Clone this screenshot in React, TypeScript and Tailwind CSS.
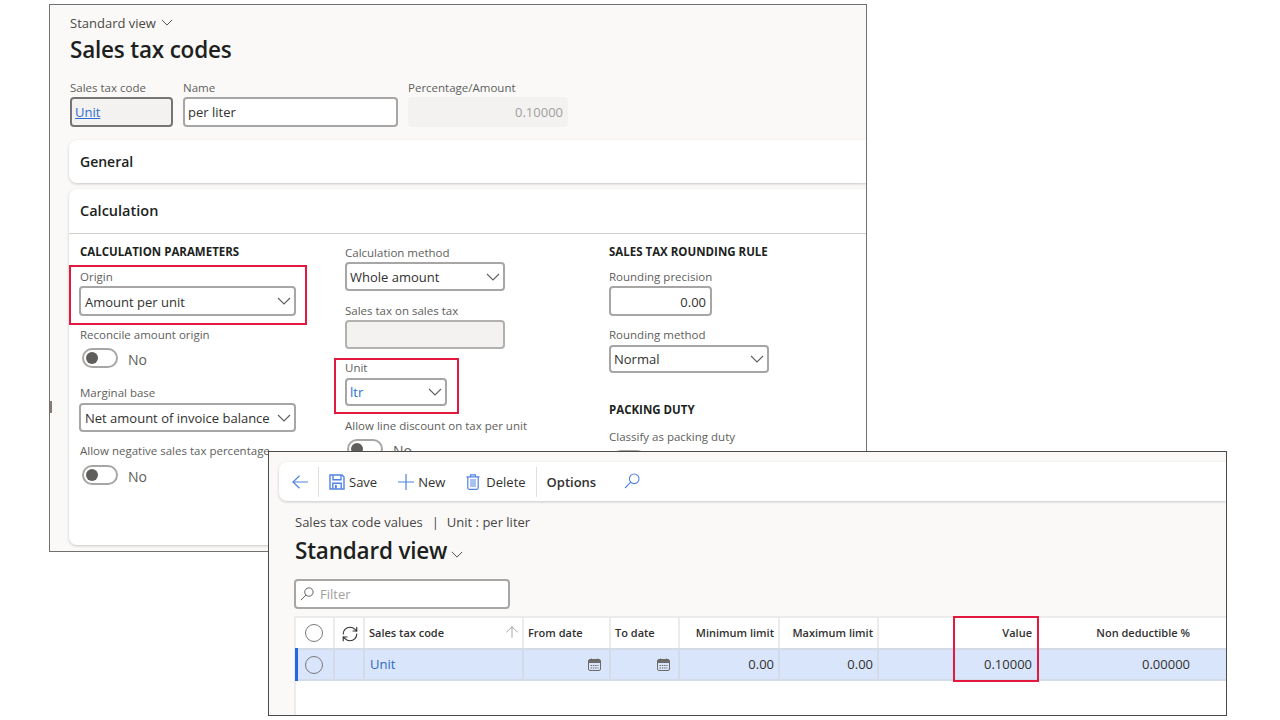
import { ArrowUp, RefreshCw } from "lucide-react"

const font = { fontFamily: '"Open Sans", "Noto Sans", sans-serif' }

function Label({ children, className = "" }: { children: string; className?: string }) {
  return <div className={`h-4 text-[11.5px] leading-4 font-medium whitespace-nowrap text-[#605e5c] ${className}`}>{children}</div>
}

function Heading({ children, className = "" }: { children: string; className?: string }) {
  return <div className={`h-4 text-[11.5px] leading-4 font-bold whitespace-nowrap text-[#201f1e] ${className}`}>{children}</div>
}

function Chevron({ className = "h-2 w-[14px] text-[#605e5c]" }: { className?: string }) {
  return (
    <svg viewBox="0 0 14 8" className={`shrink-0 ${className}`} fill="none" stroke="currentColor" strokeWidth="1.1">
      <path d="M1 1l6 6 6-6" />
    </svg>
  )
}

function Select({ value, width, height, blue, textTop = "mt-[2px]", className = "pl-[3px]" }: { value: string; width: string; height: string; blue?: boolean; textTop?: string; className?: string }) {
  return (
    <div className={`flex items-center justify-between rounded border-2 border-[#a8a6a4] bg-white pr-[3px] text-[13px] whitespace-nowrap ${blue ? "text-[#2b6fd6]" : "text-[#323130]"} ${width} ${height} ${className}`}>
      <span className={textTop}>{value}</span>
      <Chevron />
    </div>
  )
}

function Toggle({ className = "" }: { className?: string }) {
  return (
    <div className={`flex items-center ${className}`}>
      <div className="ml-[2px] flex h-5 w-9 items-center rounded-full border-2 border-[#a8a6a4] bg-white pl-[2px]">
        <div className="h-3 w-3 rounded-full bg-[#605e5c]" />
      </div>
      <span className="mt-[3px] ml-[10px] text-[14px] leading-4 text-[#605e5c]">No</span>
    </div>
  )
}

function RedBox({ className }: { className: string }) {
  return <div className={`absolute border-2 border-[#e3193f] ${className}`} />
}

function Calendar() {
  return (
    <svg viewBox="0 0 13 13" className="h-[13px] w-[13px] text-[#6d6b69]" fill="none" stroke="currentColor">
      <rect x="0.5" y="1.5" width="12" height="11" rx="1.5" />
      <path d="M1 2h11v3H1z" fill="currentColor" stroke="none" />
      <path d="M3.5 0.5v2M9.5 0.5v2" />
      <path d="M2.5 7.5h8M2.5 10h8" strokeDasharray="1.5 0.8" />
    </svg>
  )
}

function BackArrow() {
  return (
    <svg viewBox="0 0 16 14" className="h-[14px] w-4 text-[#4f83e3]" fill="none" stroke="currentColor" strokeWidth="1.2">
      <path d="M16 7H1M7.5 0.8L1 7l6.5 6.2" />
    </svg>
  )
}

function PlusIcon() {
  return (
    <svg viewBox="0 0 16 16" className="h-4 w-4 text-[#4f83e3]" fill="none" stroke="currentColor" strokeWidth="1.2">
      <path d="M8 0v16M0 8h16" />
    </svg>
  )
}

function SaveIcon() {
  return (
    <svg viewBox="0 0 16 16" className="h-4 w-4 text-[#4f83e3]" fill="none" stroke="currentColor" strokeWidth="1.4">
      <path d="M1 1h12l2 2v12H1z" />
      <path d="M4 1.2v4.6h8V1.2" />
      <path d="M3.8 14.8V9.2h8.4v5.6" />
      <path d="M6 11h1.8v3.4H6z" fill="currentColor" stroke="none" />
    </svg>
  )
}

function TrashIcon() {
  return (
    <svg viewBox="0 0 14 16" className="h-4 w-[14px] text-[#4f83e3]" fill="none" stroke="currentColor" strokeWidth="1.2">
      <path d="M0.5 2.8h13M4.6 2.8V0.8h4.8v2" />
      <path d="M1.8 2.8v11c0 .9.5 1.5 1.3 1.5h7.8c.8 0 1.3-.6 1.3-1.5v-11" />
      <rect x="4" y="5" width="6" height="8" fill="currentColor" fillOpacity="0.5" stroke="none" />
    </svg>
  )
}

function SearchIcon({ className }: { className: string }) {
  return (
    <svg viewBox="0 0 16 16" className={`shrink-0 ${className}`} fill="none" stroke="currentColor" strokeWidth="1.1">
      <circle cx="10.2" cy="5.8" r="4.8" />
      <path d="M6.8 9.2L1 15" />
    </svg>
  )
}

function Radio() {
  return <div className="h-[18px] w-[18px] rounded-full border border-[#7a7a7a]" />
}

function ToolbarItem({ icon, label, gap }: { icon: React.ReactNode; label: string; gap: string }) {
  return (
    <div className={`flex items-center text-[13px] text-[#323130] ${gap}`}>
      {icon}
      <span className="mt-[3px]">{label}</span>
    </div>
  )
}

const gridCols = "grid grid-cols-[39px_30px_159px_87px_69px_100px_99px_159px_157px_1fr]"

function HeaderCell({ children, right }: { children?: React.ReactNode; right?: boolean }) {
  return (
    <div className={`flex items-center border-r-2 border-[#edebe9] text-[11px] font-semibold whitespace-nowrap text-[#323130] ${right ? "justify-end pr-[4px]" : "pl-1"}`}>
      {children}
    </div>
  )
}

function RowCell({ children, right, icon }: { children?: React.ReactNode; right?: boolean; icon?: boolean }) {
  return (
    <div className={`flex items-center border-r-2 border-[#d3dbe8] text-[13px] text-[#323130] ${right ? "justify-end pr-[4px]" : icon ? "justify-end pr-2" : "pl-1"}`}>
      {children}
    </div>
  )
}

export default function App() {
  return (
    <div className="relative h-[720px] w-[1280px] overflow-hidden bg-white" style={font}>
      {/* back window */}
      <div className="absolute top-[4px] left-[49px] h-[548px] w-[818px] overflow-hidden border border-[#707070] bg-[#faf9f8]">
        <div className="absolute top-[396px] left-0 h-3 w-[2px] bg-[#8a7a72]" />
        <div className="pt-[10px] pl-[20px]">
          <div className="flex h-4 items-center gap-[5px] text-[13px] leading-4 text-[#4a4846]">
            Standard view
            <Chevron className="mb-[2px] h-[7px] w-[12px] text-[#4a4846]" />
          </div>
          <h1 className="mt-[3px] h-8 text-[22.5px] leading-8 font-semibold tracking-[-0.2px] text-[#201f1e]">Sales tax codes</h1>
          <div className="mt-[14px] flex">
            <div className="w-[113px]">
              <Label>Sales tax code</Label>
              <div className="mt-[1px] flex h-[30px] w-[103px] items-center rounded border-2 border-[#757575] bg-[#f3f2f1] pt-[1px] pl-[3px] text-[13px] text-[#2b6fd6] underline">Unit</div>
            </div>
            <div className="w-[225px]">
              <Label>Name</Label>
              <div className="mt-[1px] flex h-[30px] w-[215px] items-center rounded border-2 border-[#a8a6a4] bg-white pt-[1px] pl-[3px] text-[13px] text-[#323130]">per liter</div>
            </div>
            <div>
              <Label>Percentage/Amount</Label>
              <div className="mt-[1px] flex h-[30px] w-[160px] items-center justify-end rounded bg-[#f3f2f1] pt-[1px] pr-[5px] text-[13px] text-[#a19f9d]">0.10000</div>
            </div>
          </div>
        </div>
        <div className="mt-[13px] ml-[19px]">
          <div className="flex h-[43px] items-center rounded-l-lg bg-white pl-[11px] text-[14px] font-semibold text-[#201f1e] shadow-[0_1px_3px_rgba(0,0,0,0.2)]">General</div>
          <div className="mt-[6px] h-[356px] rounded-l-lg bg-white shadow-[0_1px_3px_rgba(0,0,0,0.2)]">
            <div className="flex h-[45px] items-center border-b border-[#d2d0ce] pl-[11px] text-[14.5px] font-semibold text-[#201f1e]">Calculation</div>
            <div className="flex pl-[11px]">
              {/* left column */}
              <div className="w-[265px] pt-[10px]">
                <Heading>CALCULATION PARAMETERS</Heading>
                <Label className="mt-[9px]">Origin</Label>
                <Select className="mt-[1px] -ml-px pl-[4px]" textTop="mt-[4px]" value="Amount per unit" width="w-[217px]" height="h-[30px]" />
                <Label className="mt-[11px]">Reconcile amount origin</Label>
                <Toggle className="mt-[5px]" />
                <Label className="mt-[17px]">Marginal base</Label>
                <Select className="mt-[2px] -ml-px pl-[4px]" value="Net amount of invoice balance" width="w-[217px]" height="h-[29px]" />
                <Label className="mt-[11px]">Allow negative sales tax percentage</Label>
                <Toggle className="mt-[6px]" />
              </div>
              {/* middle column */}
              <div className="w-[264px] pt-[11px]">
                <Label>Calculation method</Label>
                <Select className="mt-[1px] pl-[3px]" value="Whole amount" width="w-[160px]" height="h-[29px]" />
                <Label className="mt-[12px]">Sales tax on sales tax</Label>
                <div className="mt-[1px] h-[29px] w-[160px] rounded border-2 border-[#b3b1af] bg-[#f3f2f1]" />
                <Label className="mt-[11px]">Unit</Label>
                <Select className="mt-[2px] pl-[3px]" blue value="ltr" width="w-[102px]" height="h-[28px]" />
                <Label className="mt-[12px]">Allow line discount on tax per unit</Label>
                <Toggle className="mt-[5px]" />
              </div>
              {/* right column */}
              <div className="pt-[10px]">
                <Heading>SALES TAX ROUNDING RULE</Heading>
                <Label className="mt-[9px]">Rounding precision</Label>
                <div className="mt-[1px] flex h-[30px] w-[103px] items-center justify-end rounded border-2 border-[#a8a6a4] bg-white pt-[3px] pr-[4px] text-[13px] text-[#323130]">0.00</div>
                <Label className="mt-[11px]">Rounding method</Label>
                <Select className="mt-[2px] pl-[3px]" value="Normal" width="w-[160px]" height="h-[28px]" />
                <Heading className="mt-[29px]">PACKING DUTY</Heading>
                <Label className="mt-[11px]">Classify as packing duty</Label>
                <Toggle className="mt-[5px]" />
              </div>
            </div>
          </div>
        </div>
      </div>
      <RedBox className="top-[265px] left-[69px] h-[60px] w-[238px]" />
      <RedBox className="top-[358px] left-[334px] h-[56px] w-[125px]" />

      {/* front window */}
      <div className="absolute top-[451px] left-[268px] h-[265px] w-[959px] overflow-hidden border border-[#4a4a4a] bg-[#faf9f8]">
        <div className="mt-[10px] ml-[10px] flex h-[39px] items-center rounded-l-lg bg-white pl-[13px] shadow-[0_1px_3px_rgba(0,0,0,0.2)]">
          <BackArrow />
          <div className="mx-[10px] h-[30px] w-px bg-[#e1dfdd]" />
          <ToolbarItem icon={<SaveIcon />} label="Save" gap="gap-[4px]" />
          <div className="w-[21px]" />
          <ToolbarItem icon={<PlusIcon />} label="New" gap="gap-[4px]" />
          <div className="w-[21px]" />
          <ToolbarItem icon={<TrashIcon />} label="Delete" gap="gap-[6px]" />
          <div className="mr-[10px] ml-[10px] h-[30px] w-px bg-[#e1dfdd]" />
          <span className="mt-[3px] text-[13px] font-semibold text-[#323130]">Options</span>
          <SearchIcon className="mb-[1px] ml-[28px] h-4 w-4 text-[#4f83e3]" />
        </div>
        <div className="mt-[12px] ml-[26px] flex h-5 items-center text-[13px] text-[#484644]">
          Sales tax code values<span className="mr-[8px] ml-[9px]">|</span>Unit : per liter
        </div>
        <div className="mt-[2px] ml-[26px] flex h-8 items-center text-[22.5px] font-semibold tracking-[-0.2px] text-[#201f1e]">
          Standard view
          <Chevron className="mt-[6px] ml-[4px] h-[7px] w-[12px] text-[#484644]" />
        </div>
        <div className="mt-[12px] ml-[25px] flex h-[30px] w-[216px] items-center gap-[6px] rounded border-2 border-[#a8a6a4] bg-white pl-[4px] text-[13px] text-[#a19f9d]">
          <SearchIcon className="h-[14px] w-[14px] text-[#605e5c]" />
          <span className="mt-[1px]">Filter</span>
        </div>
        <div className="mt-[7px] ml-[25px] h-[100px] border-t-2 border-l-2 border-[#edebe9] bg-white">
          <div className={`${gridCols} h-[30px]`}>
            <HeaderCell><div className="ml-[5px]"><Radio /></div></HeaderCell>
            <HeaderCell><RefreshCw className="mt-[2px] ml-[2px] h-[18px] w-[18px] text-[#323130]" strokeWidth={1.5} /></HeaderCell>
            <HeaderCell>
              <span className="flex-1">Sales tax code</span>
              <ArrowUp className="mr-px mb-[2px] h-[18px] w-[18px] text-[#8a8886]" strokeWidth={1} />
            </HeaderCell>
            <HeaderCell>From date</HeaderCell>
            <HeaderCell>To date</HeaderCell>
            <HeaderCell right>Minimum limit</HeaderCell>
            <HeaderCell right>Maximum limit</HeaderCell>
            <div className="flex items-center justify-end pr-[6px] text-[11px] font-semibold text-[#323130]">Value</div>
            <div className="flex items-center justify-end pr-[5px] text-[11px] font-semibold text-[#323130]">Non deductible %</div>
            <div />
          </div>
          <div className={`${gridCols} relative h-[33px] border-y-2 border-[#d3dbe8] bg-[#d9e5fa]`}>
            <div className="absolute -top-[2px] -left-px h-[33px] w-[3px] bg-[#2266e3]" />
            <RowCell><div className="ml-[5px]"><Radio /></div></RowCell>
            <RowCell />
            <RowCell><span className="ml-px text-[#2f6bc0]">Unit</span></RowCell>
            <RowCell icon><Calendar /></RowCell>
            <RowCell icon><Calendar /></RowCell>
            <RowCell right>0.00</RowCell>
            <RowCell right>0.00</RowCell>
            <div className="flex items-center justify-end pr-[6px] text-[13px] text-[#323130]">0.10000</div>
            <div className="flex items-center justify-end pr-[5px] text-[13px] text-[#323130]">0.00000</div>
            <div />
          </div>
        </div>
      </div>
      <RedBox className="top-[616px] left-[953px] h-[66px] w-[86px]" />
    </div>
  )
}
